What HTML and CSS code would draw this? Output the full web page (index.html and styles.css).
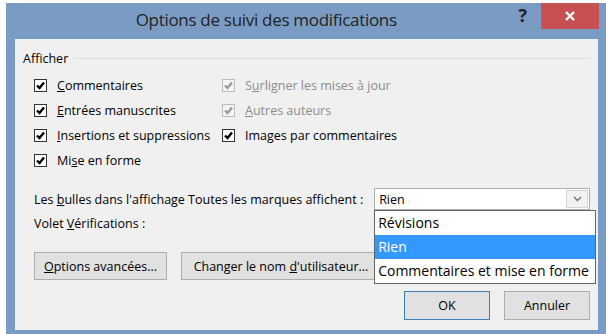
FILE: index.html
```html
<!DOCTYPE html>
<html lang="fr">
<head>
  <meta charset="UTF-8" />
  <link rel="stylesheet" href="styles.css">
</head>
<body>
  <div class="window">
    <div class="titlebar">
      <span class="title">Options de suivi des modifications</span>
      <span class="help">?</span>
      <span class="close">
        <svg width="12" height="12" viewBox="0 0 12 12"><path d="M2 2 L10 10 M10 2 L2 10" stroke="#fff" stroke-width="2.4"/></svg>
      </span>
    </div>
    <div class="content">
      <div class="group-title"><span>Afficher</span><span class="line"></span></div>
      <div class="checks">
        <label class="check"><span class="box"><svg viewBox="0 0 11 11"><path d="M2 5.5 L4.5 8 L9 2.5"/></svg></span><span><u>C</u>ommentaires</span></label>
        <label class="check off"><span class="box"><svg viewBox="0 0 11 11"><path d="M2 5.5 L4.5 8 L9 2.5"/></svg></span><span>S<u>u</u>rligner les mises à jour</span></label>
        <label class="check"><span class="box"><svg viewBox="0 0 11 11"><path d="M2 5.5 L4.5 8 L9 2.5"/></svg></span><span><u>E</u>ntrées manuscrites</span></label>
        <label class="check off"><span class="box"><svg viewBox="0 0 11 11"><path d="M2 5.5 L4.5 8 L9 2.5"/></svg></span><span><u>A</u>utres auteurs</span></label>
        <label class="check"><span class="box"><svg viewBox="0 0 11 11"><path d="M2 5.5 L4.5 8 L9 2.5"/></svg></span><span><u>I</u>nsertions et suppressions</span></label>
        <label class="check"><span class="box"><svg viewBox="0 0 11 11"><path d="M2 5.5 L4.5 8 L9 2.5"/></svg></span><span>Ima<u>g</u>es par commentaires</span></label>
        <label class="check"><span class="box"><svg viewBox="0 0 11 11"><path d="M2 5.5 L4.5 8 L9 2.5"/></svg></span><span>Mi<u>s</u>e en forme</span></label>
      </div>
      <div class="field-row">
        <span class="field-label">Les <u>b</u>ulles dans l'affichage Toutes les marques affichent :</span>
        <div class="select">
          <span class="value">Rien</span>
          <span class="arrow"><svg width="9" height="6" viewBox="0 0 9 6"><path d="M1 1 L4.5 4.5 L8 1" fill="none" stroke="#6d6d6d" stroke-width="1.4"/></svg></span>
          <ul class="dropdown">
            <li>Révisions</li>
            <li class="selected">Rien</li>
            <li>Commentaires et mise en forme</li>
          </ul>
        </div>
      </div>
      <div class="field-row plain">
        <span class="field-label">Volet <u>V</u>érifications :</span>
      </div>
      <div class="buttons">
        <button class="btn wide"><u>O</u>ptions avancées...</button>
        <button class="btn wider">Changer le nom <u>d</u>'utilisateur...</button>
      </div>
      <div class="actions">
        <button class="btn default">OK</button>
        <button class="btn">Annuler</button>
      </div>
    </div>
  </div>
</body>
</html>
```

FILE: styles.css
```css
body {
  margin: 0;
  background: #ffffff;
  font-family: "Open Sans", "Noto Sans", sans-serif;
  font-size: 12.5px;
  color: #000;
  overflow: hidden;
}

.window {
  margin: 3px 0 0 6px;
  width: 600px;
  height: 331px;
  background: #7a9cc4;
  display: flex;
  flex-direction: column;
}

.titlebar {
  height: 36px;
  display: flex;
  align-items: flex-start;
}

.title {
  flex: 1;
  text-align: center;
  font-size: 17px;
  letter-spacing: -0.3px;
  color: #222;
  line-height: 34px;
  padding-left: 8px;
}

.help {
  font-size: 18px;
  font-weight: bold;
  color: #222;
  line-height: 24px;
  margin-right: 14px;
}

.close {
  width: 58px;
  height: 26px;
  background: #c75050;
  margin-right: 7px;
  display: flex;
  align-items: center;
  justify-content: center;
}

.content {
  flex: 1;
  margin: 0 8px 4px 9px;
  background: #f0f0f0;
  padding: 11px 8px 0 8px;
  position: relative;
}

.group-title {
  display: flex;
  align-items: center;
  height: 16px;
  gap: 6px;

  > .line {
    flex: 1;
    border-top: 1px solid #dcdcdc;
  }
}

.checks {
  display: grid;
  grid-template-columns: 188px 1fr;
  grid-auto-rows: 25px;
  margin: 7px 0 0 11px;
}

.check {
  display: flex;
  align-items: center;
  gap: 10px;

  > .box {
    width: 11px;
    height: 11px;
    border: 1px solid #333;
    background: #fff;
    display: flex;
  }

  svg {
    width: 11px;
    height: 11px;
  }

  path {
    fill: none;
    stroke: #000;
    stroke-width: 2.4;
  }

  &.off {
    color: #8c8c8c;

    > .box {
      border-color: #bcbcbc;
      background: #f4f4f4;
    }

    path {
      stroke: #9a9a9a;
    }
  }
}

.field-row {
  display: flex;
  align-items: center;
  margin: 15px 0 0 11px;
  height: 22px;

  &.plain {
    margin-top: 1px;
    height: 25px;
  }
}

.field-label {
  width: 342px;
}

.select {
  position: relative;
  width: 215px;
  height: 20px;
  border: 1px solid #abadb3;
  background: #fff;
  display: flex;
  align-items: center;

  > .value {
    flex: 1;
    padding-left: 4px;
  }

  > .arrow {
    width: 22px;
    height: 18px;
    margin-right: 1px;
    border: 1px solid #d4d4d4;
    background: #f2f2f2;
    box-sizing: border-box;
    display: flex;
    align-items: center;
    justify-content: center;
  }
}

.dropdown {
  position: absolute;
  top: 21px;
  left: -1px;
  width: 220px;
  margin: 0;
  padding: 0;
  list-style: none;
  background: #fff;
  border: 1px solid #646464;
  font-size: 14px;
  z-index: 2;

  > li {
    height: 24px;
    line-height: 24px;
    padding-left: 3px;
    white-space: nowrap;
  }

  > .selected {
    background: #3399ff;
    color: #fff;
  }
}

.btn {
  font-family: inherit;
  font-size: 12.5px;
  height: 28px;
  background: #e1e1e1;
  border: 1px solid #adadad;
  color: #000;
  padding: 0;
  margin: 0;
}

.buttons {
  display: flex;
  gap: 14px;
  margin: 16px 0 0 11px;

  > .wide {
    width: 133px;
  }

  > .wider {
    width: 200px;
  }
}

.actions {
  display: flex;
  justify-content: flex-end;
  gap: 14px;
  margin-top: 11px;

  > .btn {
    width: 86px;
    height: 29px;
  }

  > .default {
    border-color: #3c7fb1;
  }
}
```
